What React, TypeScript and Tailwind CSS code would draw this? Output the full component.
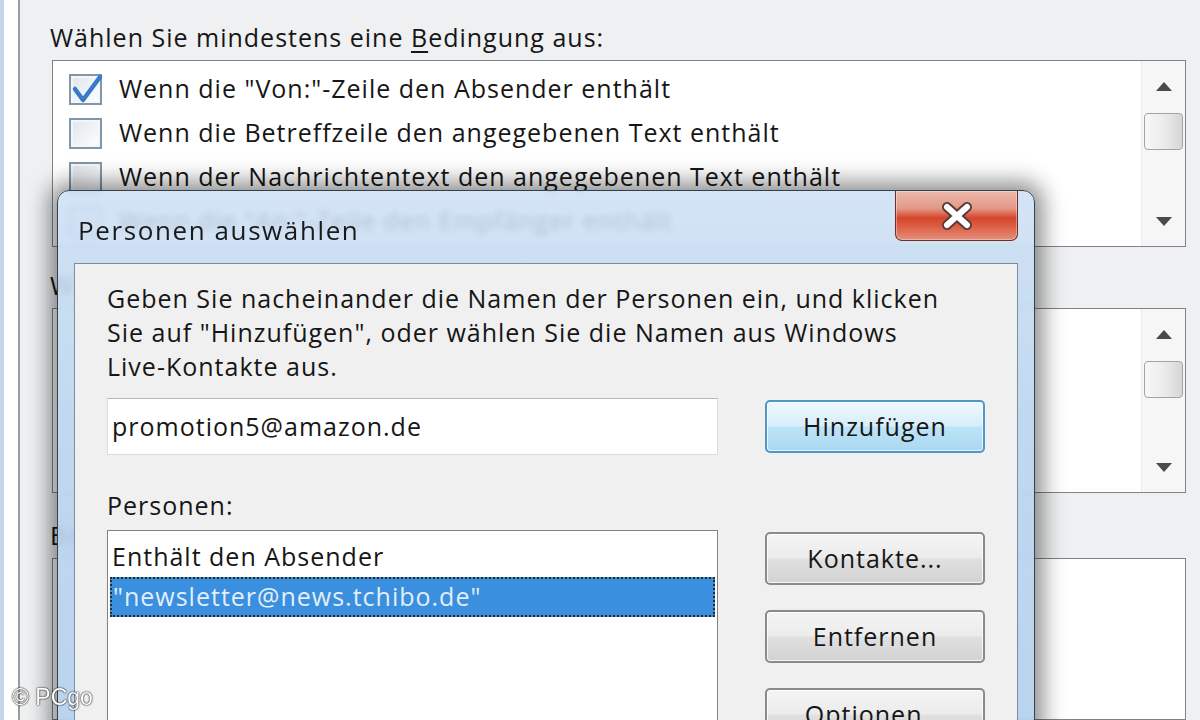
import React from "react";

const ROWS = [
  { label: 'Wenn die "Von:"-Zeile den Absender enthält', checked: true },
  { label: "Wenn die Betreffzeile den angegebenen Text enthält" },
  { label: "Wenn der Nachrichtentext den angegebenen Text enthält" },
  { label: 'Wenn die "An:"-Zeile den Empfänger enthält' },
];

const Arrow = ({ down }: { down?: boolean }) => (
  <svg width="16" height="9" viewBox="0 0 16 9">
    <path d={down ? "M0 0 H16 L8 9 Z" : "M0 9 H16 L8 0 Z"} fill="#4a4a4a" />
  </svg>
);

const ScrollBar = () => (
  <div className="flex w-[44px] shrink-0 flex-col border-l border-[#ececec] bg-[#f6f6f6]">
    <div className="flex h-[50px] items-center justify-center">
      <Arrow />
    </div>
    <div className="mx-[2px] mt-[2px] h-[37px] rounded-[4px] border border-[#a3a3a3] bg-linear-to-r from-[#f7f7f7] via-[#ececec] to-[#d6d6d6]" />
    <div className="flex-1" />
    <div className="flex h-[50px] items-center justify-center">
      <Arrow down />
    </div>
  </div>
);

const CheckBox = ({ checked }: { checked?: boolean }) => (
  <div className="relative h-[31px] w-[33px] shrink-0 border-2 border-[#8096ac] bg-linear-to-br from-[#dfe5ec] to-white shadow-[inset_0_0_0_2px_#f4f6f8]">
    {checked && (
      <svg className="absolute -left-[2px] -top-[4px]" width="36" height="34" viewBox="0 0 36 34">
        <path d="M6 17 L14 28 L31 5" fill="none" stroke="#3a79c9" strokeWidth="4.5" strokeLinecap="round" strokeLinejoin="round" />
      </svg>
    )}
  </div>
);

const Button = ({ children, primary }: { children: React.ReactNode; primary?: boolean }) => (
  <div
    className={
      primary
        ? "flex h-[53px] w-[220px] items-center justify-center rounded-[5px] border-2 border-[#4f97c4] bg-[linear-gradient(#eef8fd,#d8eefa_48%,#bde3f7_52%,#a9d8f1)] shadow-[inset_0_0_0_1px_rgba(255,255,255,0.7)]"
        : "flex h-[53px] w-[220px] items-center justify-center rounded-[5px] border-2 border-[#8a8a8a] bg-[linear-gradient(#f4f4f4,#ececec_48%,#e0e0e0_52%,#d2d2d2)] shadow-[inset_0_0_0_1px_rgba(255,255,255,0.8)]"
    }
  >
    {children}
  </div>
);

const CloseButton = () => (
  <div className="mr-[16px] flex h-[50px] w-[123px] items-center justify-center rounded-b-[7px] border border-t-0 border-[#6a3026] bg-[linear-gradient(#ecb8ac,#e39a88_35%,#d6462d_55%,#dc5a40_70%,#e6907c)] shadow-[inset_0_0_0_1px_rgba(255,255,255,0.35)]">
    <svg width="34" height="30" viewBox="0 0 34 30">
      <path d="M7 6 L27 24 M27 6 L7 24" stroke="#5a3a3a" strokeWidth="10" strokeLinecap="round" />
      <path d="M7 6 L27 24 M27 6 L7 24" stroke="#ffffff" strokeWidth="6" strokeLinecap="round" />
    </svg>
  </div>
);

export default function App() {
  return (
    <div className="relative h-[720px] w-[1200px] overflow-hidden bg-[#eef0f1] font-['Open_Sans',sans-serif] text-[25px] tracking-[1px] text-[#161616]">
      {/* Rules window in the background */}
      <div className="flex h-full">
        <div className="w-[4px] bg-[#c3d5e8]" />
        <div className="w-[14px] bg-white" />
        <div className="w-[2px] bg-[#9c9c9c]" />
        <div className="flex flex-1 flex-col pl-[32px] pr-[14px] pt-[22px]">
          <div className="-ml-[2px] whitespace-nowrap leading-[30px]">
            Wählen Sie mindestens eine <span className="underline underline-offset-4">B</span>edingung aus:
          </div>
          <div className="mt-[8px] flex h-[187px] border border-[#7f8287] bg-white">
            <div className="flex flex-1 flex-col overflow-hidden pt-[6px]">
              {ROWS.map((r) => (
                <div key={r.label} className="flex h-[44px] shrink-0 items-center gap-[17px] pl-[16px] whitespace-nowrap">
                  <CheckBox checked={r.checked} />
                  <span>{r.label}</span>
                </div>
              ))}
            </div>
            <ScrollBar />
          </div>

          <div className="-ml-[2px] mt-[23px] whitespace-nowrap leading-[30px]">
            Wählen Sie mindestens eine <span className="underline underline-offset-4">A</span>ktion aus:
          </div>
          <div className="mt-[8px] flex h-[185px] border border-[#7f8287] bg-white">
            <div className="flex-1" />
            <ScrollBar />
          </div>

          <div className="-ml-[2px] mt-[27px] whitespace-nowrap leading-[30px]">
            Beschreibung der Regel (unterstrichene Werte anklicken, um sie zu ändern):
          </div>
          <div className="mt-[8px] flex-1 border border-[#7f8287] bg-white" />
        </div>
      </div>

      {/* Dialog "Personen auswählen" */}
      <div className="absolute left-[57px] top-[190px] flex h-[560px] w-[978px] flex-col rounded-t-[12px] border border-[#34404c] bg-[linear-gradient(rgba(205,224,244,0.86),rgba(186,212,238,0.9)_40%,rgba(180,207,236,0.92))] shadow-[0_0_22px_8px_rgba(0,0,0,0.45)] backdrop-blur-[3px]">
        <div className="flex h-[72px] shrink-0 items-start justify-between">
          <div className="pl-[20px] pt-[22px] text-[26px] leading-[34px] tracking-[1.6px] text-[#1a1a1a]">Personen auswählen</div>
          <CloseButton />
        </div>

        <div className="mx-[16px] flex-1 border border-[#7a8ea4] bg-[#f0f0f0] px-[32px] pt-[17px]">
          <p className="whitespace-nowrap leading-[34px]">
            Geben Sie nacheinander die Namen der Personen ein, und klicken
            <br />
            Sie auf "Hinzufügen", oder wählen Sie die Namen aus Windows
            <br />
            Live-Kontakte aus.
          </p>

          <div className="mt-[15px] flex items-start gap-[47px]">
            <div className="flex h-[57px] w-[611px] items-center border border-[#d8dde3] border-t-[#b4b8be] bg-white pl-[4px]">
              promotion5@amazon.de
            </div>
            <div className="mt-[2px]">
              <Button primary>Hinzufügen</Button>
            </div>
          </div>

          <div className="mt-[35px] leading-[30px]">Personen:</div>

          <div className="mt-[10px] flex items-start gap-[47px]">
            <div className="h-[240px] w-[611px] border border-[#7f8287] bg-white pt-[6px]">
              <div className="flex h-[40px] items-center pl-[4px]">Enthält den Absender</div>
              <div className="mx-[2px] flex h-[40px] items-center border-2 border-dotted border-[#2a2a2a] bg-[#3a8fde] pl-[1px] text-[#e2eefa]">
                "newsletter@news.tchibo.de"
              </div>
            </div>
            <div className="flex flex-col gap-[25px] pt-[2px]">
              <Button>Kontakte...</Button>
              <Button>Entfernen</Button>
              <Button>Optionen...</Button>
            </div>
          </div>
        </div>
      </div>

      {/* Watermark */}
      <div className="absolute left-[12px] top-[684px] font-['Liberation_Sans',Arial,sans-serif] text-[23px] leading-[26px] tracking-normal text-white [text-shadow:0_0_2px_rgba(0,0,0,0.9),0_0_1px_rgba(0,0,0,0.9)]">
        © PCgo
      </div>
    </div>
  );
}
